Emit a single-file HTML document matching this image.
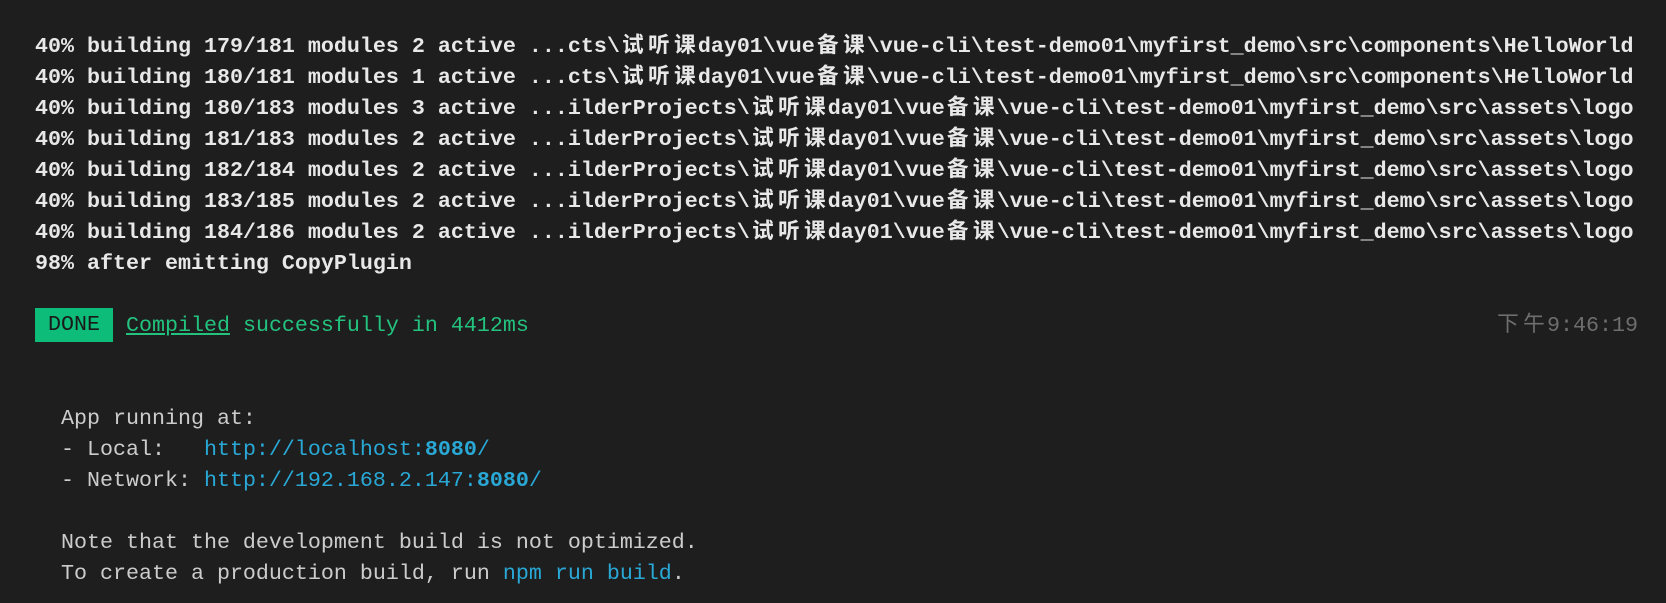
<!DOCTYPE html>
<html><head><meta charset="utf-8"><style>
html,body{margin:0;padding:0;background:#1e1e1e;width:1666px;height:603px;overflow:hidden}
.t{position:absolute;left:35px;top:30.5px;font-family:"Liberation Mono","Noto Sans CJK SC",monospace;font-size:21.67px;line-height:31px;color:#cccccc}
.l{height:31px;position:relative;white-space:pre}
.b{font-weight:bold;color:#e8e8e8}
.c{display:inline-block;width:26px;text-align:center}
.done{background:#0dbc79;color:#1a1a1a;display:inline-block;line-height:34px;margin-top:-1.5px;vertical-align:top}
.g{color:#23c27e}
.u{text-decoration:underline}
.bl{color:#29a8d6}
.ts{position:absolute;left:1460px;color:#6e6e6e}
</style></head><body><div class="t"><div class="l b">40% building 179/181 modules 2 active ...cts\<span class="c">试</span><span class="c">听</span><span class="c">课</span>day01\vue<span class="c">备</span><span class="c">课</span>\vue-cli\test-demo01\myfirst_demo\src\components\HelloWorld</div><div class="l b">40% building 180/181 modules 1 active ...cts\<span class="c">试</span><span class="c">听</span><span class="c">课</span>day01\vue<span class="c">备</span><span class="c">课</span>\vue-cli\test-demo01\myfirst_demo\src\components\HelloWorld</div><div class="l b">40% building 180/183 modules 3 active ...ilderProjects\<span class="c">试</span><span class="c">听</span><span class="c">课</span>day01\vue<span class="c">备</span><span class="c">课</span>\vue-cli\test-demo01\myfirst_demo\src\assets\logo</div><div class="l b">40% building 181/183 modules 2 active ...ilderProjects\<span class="c">试</span><span class="c">听</span><span class="c">课</span>day01\vue<span class="c">备</span><span class="c">课</span>\vue-cli\test-demo01\myfirst_demo\src\assets\logo</div><div class="l b">40% building 182/184 modules 2 active ...ilderProjects\<span class="c">试</span><span class="c">听</span><span class="c">课</span>day01\vue<span class="c">备</span><span class="c">课</span>\vue-cli\test-demo01\myfirst_demo\src\assets\logo</div><div class="l b">40% building 183/185 modules 2 active ...ilderProjects\<span class="c">试</span><span class="c">听</span><span class="c">课</span>day01\vue<span class="c">备</span><span class="c">课</span>\vue-cli\test-demo01\myfirst_demo\src\assets\logo</div><div class="l b">40% building 184/186 modules 2 active ...ilderProjects\<span class="c">试</span><span class="c">听</span><span class="c">课</span>day01\vue<span class="c">备</span><span class="c">课</span>\vue-cli\test-demo01\myfirst_demo\src\assets\logo</div><div class="l b">98% after emitting CopyPlugin</div><div class="l"></div><div class="l"><span class="done"> DONE </span> <span class="g u">Compiled</span><span class="g"> successfully in 4412ms</span><span class="ts"><span class="c">下</span><span class="c">午</span>9:46:19</span></div><div class="l"></div><div class="l"></div><div class="l">  App running at:</div><div class="l">  - Local:   <span class="bl">http://localhost:<b>8080</b>/</span></div><div class="l">  - Network: <span class="bl">http://192.168.2.147:<b>8080</b>/</span></div><div class="l"></div><div class="l">  Note that the development build is not optimized.</div><div class="l">  To create a production build, run <span class="bl">npm run build</span>.</div></div></body></html>
